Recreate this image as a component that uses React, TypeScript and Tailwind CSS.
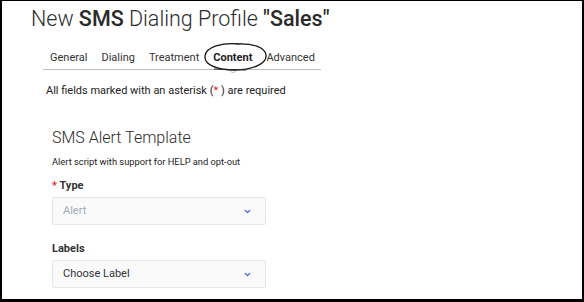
import { ChevronDown } from "lucide-react";

const tabs = ["General", "Dialing", "Treatment", "Content", "Advanced"];

function Select({ value, muted }: { value: string; muted?: boolean }) {
  return (
    <div className="mt-[3px] flex h-[28px] w-[214px] items-center justify-between rounded-[2px] border border-[#e4e7eb] bg-[#fafafb] pl-[10px] pr-[13px]">
      <span className={muted ? "text-[11px] text-[#a3abb8]" : "text-[11px] text-[#333]"}>{value}</span>
      <ChevronDown size={9} strokeWidth={3.5} className="text-[#3d5ce0]" />
    </div>
  );
}

export default function App() {
  return (
    <div
      className="relative h-[302px] w-[584px] border-t border-l-2 border-r-2 border-b-[3px] border-black bg-white text-[#333]"
      style={{ fontFamily: "Roboto, 'Liberation Sans', sans-serif" }}
    >
      <h1 className="pl-[29px] pt-[6px] text-[21.5px] leading-[24px] font-light text-[#2b2b2b]">
        New <span className="font-medium">SMS</span> Dialing Profile <span className="font-medium">"Sales"</span>
      </h1>

      <div className="ml-[41px] mt-[19px] flex w-[278px] border-b border-[#b9bdc4] pb-[3px]">
        {tabs.map((t) => (
          <span
            key={t}
            className={
              t === "Content"
                ? "px-[7px] text-[11px] leading-[16px] font-bold text-[#222]"
                : "px-[7px] text-[11px] leading-[16px] text-[#333]"
            }
          >
            {t}
          </span>
        ))}
      </div>

      <p className="ml-[44px] mt-[13px] text-[11px] leading-[16px] text-[#222]">
        All fields marked with an asterisk (<span className="text-[#e3262b]">*</span> ) are required
      </p>

      <div className="ml-[50px]">
        <h2 className="mt-[29px] text-[16px] leading-[20px] font-light text-[#2b2b2b]">SMS Alert Template</h2>
        <p className="mt-[7px] text-[9.3px] leading-[14px] text-[#222]">Alert script with support for HELP and opt-out</p>

        <p className="mt-[9px] text-[11px] leading-[16px] font-bold text-[#333]">
          <span className="text-[#e3262b]">*</span> Type
        </p>
        <Select value="Alert" muted />

        <p className="mt-[16px] text-[11px] leading-[16px] font-bold text-[#333]">Labels</p>
        <Select value="Choose Label" />
      </div>

      {/* hand drawn circle around the Content tab */}
      <svg className="pointer-events-none absolute left-[198px] top-[39px]" width="72" height="36" viewBox="0 0 72 36">
        <path
          d="M40 4 C22 2 6 7 5 16 C4 25 18 30 34 30 C52 30 67 24 66 15 C65 7 52 3 36 4"
          fill="none"
          stroke="#111"
          strokeWidth="1.3"
        />
        <path d="M14 29 L46 30" fill="none" stroke="#222" strokeWidth="1.2" />
        <path d="M30 31 C32 33 34 33 36 31" fill="none" stroke="#999" strokeWidth="1" opacity="0.6" />
      </svg>
    </div>
  );
}
